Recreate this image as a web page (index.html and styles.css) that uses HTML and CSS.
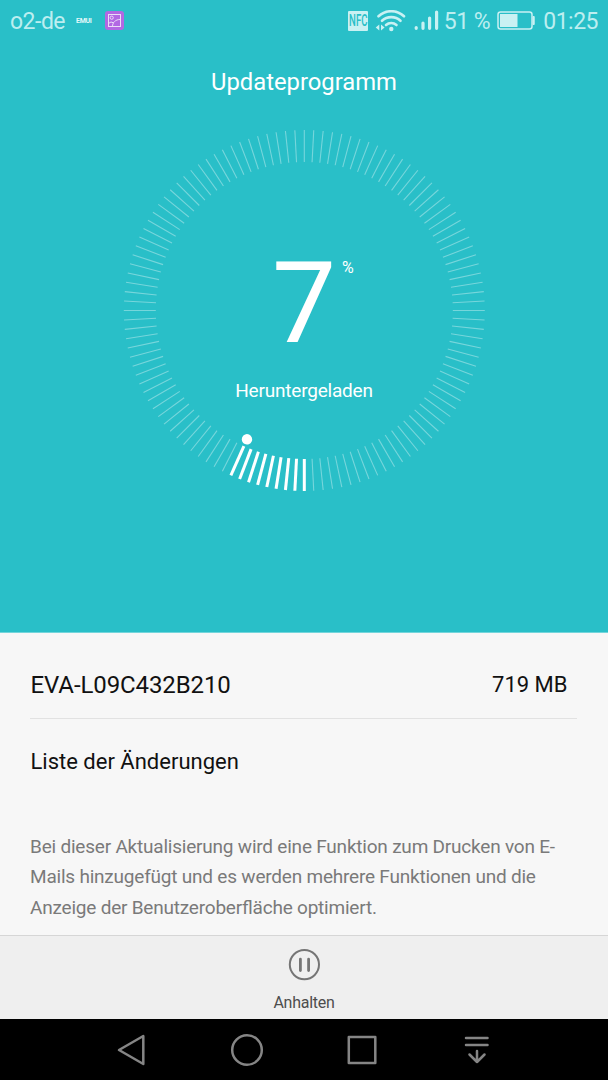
FILE: index.html
```html
<!DOCTYPE html>
<html lang="de">
<head>
  <meta charset="UTF-8">
  <title>Updateprogramm</title>
  <link rel="stylesheet" href="styles.css">
</head>
<body>

  <section class="hero">
    <div class="status-bar">
      <span class="carrier">o2-de</span>
      <span class="emui">EMUI</span>
      <svg class="gallery-icon" width="19" height="19" viewBox="0 0 19 19">
        <rect width="19" height="19" rx="3" fill="#b268e3"/>
        <g fill="none" stroke="#eadcf8" stroke-width="1">
          <rect x="3.5" y="3.5" width="12" height="12"/>
          <circle cx="6.7" cy="6.7" r="1.6"/>
          <path d="M3.500 12.500l2.500-1.500 3 1M7.500 15.500c0-4 3-7 7.500-7"/>
        </g>
      </svg>

      <div class="status-right">
        <span class="nfc"><span>NFC</span></span>
        <svg class="wifi-icon" width="31" height="22" viewBox="0 0 31 22">
          <g fill="none" stroke="#c9f1f3" stroke-width="2.6" stroke-linecap="round">
            <path d="M3.500 6.300a18.500 18.500 0 0 1 25.500 0"/>
            <path d="M7 10.800a13.500 13.500 0 0 1 18.500 0"/>
            <path d="M11 15a8 8 0 0 1 10.500 0"/>
          </g>
          <circle cx="16.300" cy="19" r="2.200" fill="#c9f1f3"/>
          <path d="M4.300 14.500v6L.700 17.500zM6 14.500v6l3.600-3z" fill="#c9f1f3"/>
        </svg>
        <svg class="signal-icon" width="25" height="21" viewBox="0 0 25 21">
          <g stroke="#c9f1f3" stroke-width="3.2" stroke-linecap="round">
            <path d="M2.200 17.500v.800M9 13v5.300M15.600 8v10.300M22.600 2v16.300"/>
          </g>
        </svg>
        <span class="percent">51 %</span>
        <svg class="battery-icon" width="38" height="19" viewBox="0 0 38 19">
          <rect x="1" y="1" width="34" height="17" rx="2.500" fill="none" stroke="#c9f1f3" stroke-width="1.500"/>
          <rect x="3" y="3" width="17.500" height="13" fill="#c9f1f3"/>
          <path d="M36 5.500h1.200v8H36z" fill="#c9f1f3" stroke="#c9f1f3"/>
        </svg>
        <span class="clock">01:25</span>
      </div>
    </div>

    <h1>Updateprogramm</h1>

    <div class="dial">
      <svg class="ticks" id="ticks" width="364" height="364" viewBox="-182.3 -182.5 364 364"></svg>
      <div class="value">7<span class="unit">%</span></div>
      <div class="state">Heruntergeladen</div>
    </div>
  </section>

  <section class="details">
    <div class="version">
      <span class="build">EVA-L09C432B210</span>
      <span class="size">719 MB</span>
    </div>
    <h2>Liste der Änderungen</h2>
    <p>Bei dieser Aktualisierung wird eine Funktion zum Drucken von E-<br>Mails hinzugefügt und es werden mehrere Funktionen und die<br>Anzeige der Benutzeroberfläche optimiert.</p>
  </section>

  <button class="pause">
    <svg width="32" height="32" viewBox="0 0 32 32" fill="none" stroke="#757575">
      <circle cx="16.400" cy="15.600" r="14.600" stroke-width="2"/>
      <path d="M12.400 10.200v11.300M20.600 10.200v11.300" stroke-width="2.800" stroke-linecap="round"/>
    </svg>
    <span>Anhalten</span>
  </button>

  <nav class="nav-bar">
    <svg width="34" height="34" viewBox="0 0 34 34">
      <path d="M4 17L28.300 3v28z"/>
    </svg>
    <svg width="34" height="34" viewBox="0 0 34 34">
      <circle cx="17" cy="17" r="14.800"/>
    </svg>
    <svg width="34" height="34" viewBox="0 0 34 34">
      <rect x="3.800" y="4" width="26.500" height="26"/>
    </svg>
    <svg width="34" height="34" viewBox="0 0 34 34">
      <path d="M6 5h21.500M6 12h21.500M17 18v11M9.500 21.500l7.500 7.500 7.500-7.500"/>
    </svg>
  </nav>

  <script>
    const progress = 7;
    const total = 120;
    const done = Math.floor(total * progress / 100);
    const step = 360 / total;

    let marks = "";
    for (let i = 0; i < total; i++) {
      const cls = i <= done ? "tick done" : "tick";
      marks += `<line class="${cls}" y1="148.5" y2="180.5" transform="rotate(${i * step})"/>`;
    }
    marks += `<circle class="knob" cy="141" r="5.2" transform="rotate(${done * step})"/>`;

    document.getElementById("ticks").innerHTML = marks;
  </script>

</body>
</html>
```
FILE: styles.css
```css
* {
  box-sizing: border-box;
}

body {
  margin: 0;
  height: 1080px;
  display: flex;
  flex-direction: column;
  font-family: Roboto, sans-serif;
  background: #f7f7f7;
  overflow: hidden;
}

svg {
  display: block;
  flex: none;
}

.hero {
  height: 633px;
  flex: none;
  background: #29bfc8;
  border-bottom: 1px solid #73d5db;
  color: white;
}

.status-bar {
  display: flex;
  align-items: center;
  height: 41px;
  padding: 0 10px;
  color: #bceef0;
  font-size: 23px;
  letter-spacing: -0.5px;
  white-space: nowrap;
}

.emui {
  margin-left: 11px;
  width: 17px;
  font-size: 7px;
  font-weight: bold;
  letter-spacing: -0.3px;
  color: #e4f9fa;
}

.gallery-icon {
  margin-left: 12px;
}

.status-right {
  display: flex;
  align-items: center;
  margin-left: auto;
}

.nfc {
  display: flex;
  align-items: center;
  justify-content: center;
  width: 20px;
  height: 20px;
  border-radius: 1px;
  background: #c9f1f3;
  color: #29bfc8;
  font-size: 16px;
  font-weight: 500;
  letter-spacing: 0;
}

.nfc span {
  flex: none;
  transform: scaleX(0.6);
}

.wifi-icon {
  margin-left: 7px;
}

.signal-icon {
  margin-left: 8px;
}

.percent {
  margin-left: 5px;
}

.battery-icon {
  margin-left: 7px;
}

.clock {
  margin-left: 8px;
}

.carrier,
.percent,
.clock {
  padding-top: 1px;
}

h1 {
  margin: 25px 0 0;
  font-size: 23.8px;
  line-height: 32px;
  font-weight: normal;
  text-align: center;
}

.dial {
  position: relative;
  width: 364px;
  height: 364px;
  margin: 30px auto 0;
  padding-top: 108px;
  text-align: center;
}

.ticks {
  position: absolute;
  top: 0;
  left: 0;
}

.tick {
  stroke: white;
  stroke-width: 1.1;
  opacity: 0.36;
}

.tick.done {
  stroke-width: 3;
  opacity: 1;
}

.knob {
  fill: white;
}

.value {
  position: relative;
  font-size: 114px;
  line-height: 134px;
}

.unit {
  position: absolute;
  left: 220px;
  top: 22px;
  font-size: 16px;
  line-height: 20px;
}

.state {
  margin-top: 8px;
  font-size: 19px;
  line-height: 26px;
  letter-spacing: -0.2px;
}

.details {
  flex: 1;
  padding: 0 31px 0 30px;
}

.version {
  display: flex;
  align-items: center;
  justify-content: space-between;
  height: 86px;
  padding: 18px 9.5px 0 0.5px;
  border-bottom: 1px solid #e2e2e2;
  color: #111;
}

.build {
  font-size: 24px;
  letter-spacing: -0.1px;
}

.size {
  font-size: 22px;
}

h2 {
  margin: 28px 0 0 0.5px;
  font-size: 22px;
  line-height: 30px;
  font-weight: normal;
  color: #111;
}

p {
  margin: 55px 0 0;
  font-size: 19px;
  line-height: 30.3px;
  letter-spacing: -0.21px;
  font-feature-settings: "liga" 1;
  color: #7a7a7a;
  white-space: nowrap;
}

.pause {
  display: flex;
  flex-direction: column;
  align-items: center;
  flex: none;
  height: 84px;
  padding: 13px 0 0;
  border: none;
  border-top: 1px solid #d6d6d6;
  background: #efefef;
  font-family: inherit;
  font-size: 16px;
  letter-spacing: -0.25px;
  line-height: 20px;
  color: #4d4d4d;
}

.pause span {
  margin-top: 12px;
}

.nav-bar {
  display: flex;
  align-items: center;
  justify-content: center;
  gap: 81px;
  flex: none;
  height: 61px;
  background: black;
}

.nav-bar svg {
  fill: none;
  stroke: #858585;
  stroke-width: 2.5;
  stroke-linecap: round;
  stroke-linejoin: round;
}
```
